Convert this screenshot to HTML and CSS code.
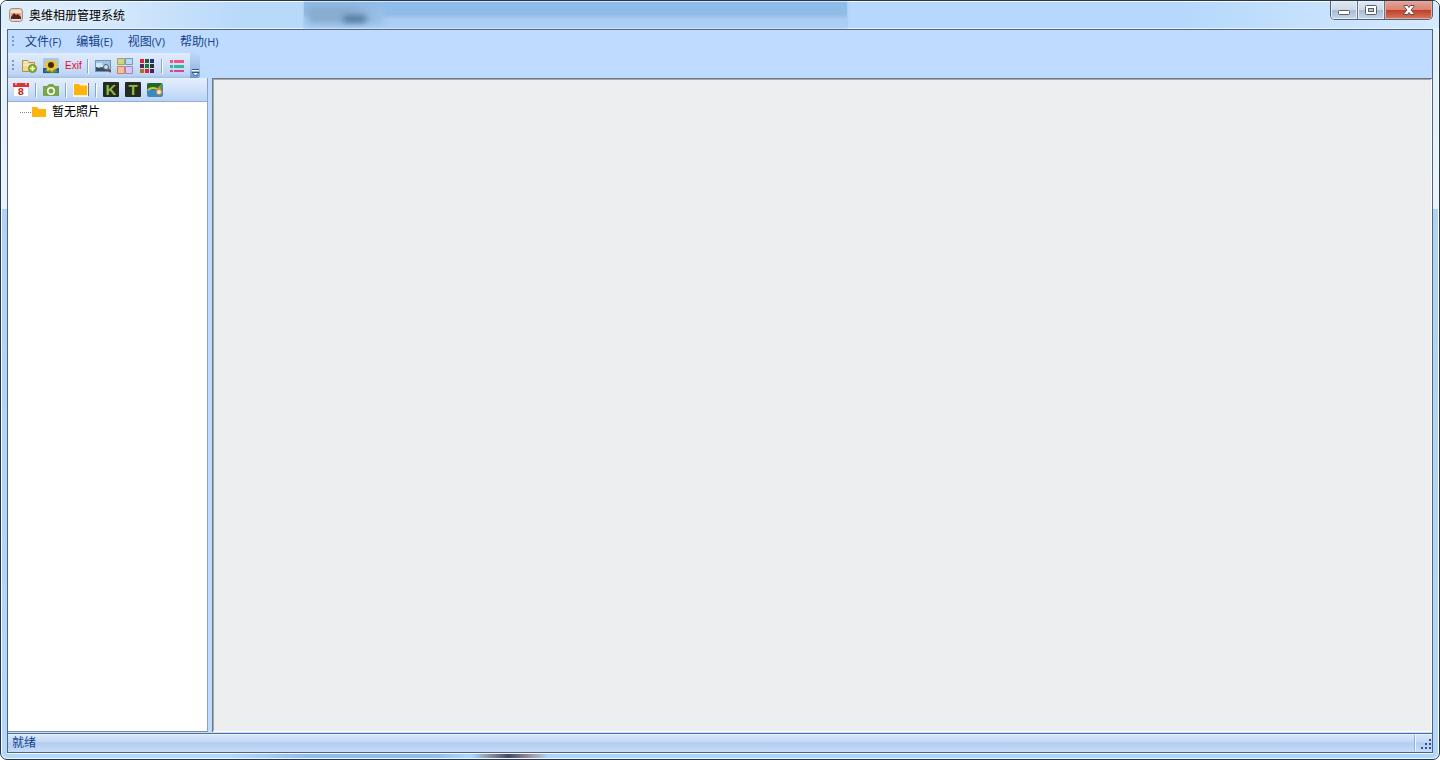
FILE: index.html
```html
<!DOCTYPE html>
<html lang="zh-CN">
<head>
<meta charset="utf-8">
<title>奥维相册管理系统</title>
<link rel="stylesheet" href="styles.css">
</head>
<body>
<div class="window">
  <header class="titlebar">
    <div class="glass" aria-hidden="true"><i class="smudge green"></i><i class="smudge dark"></i></div>
    <svg class="app-icon" viewBox="0 0 14 14"><rect x=".5" y=".5" width="13" height="13" rx="3" fill="#e2cdb9" stroke="#9d8e85"/><rect x="2" y="2" width="10" height="10" rx="1" fill="#f8ddc2"/><path d="M2 5h10v4H2z" fill="#eda578"/><path d="M2 11V9l3-4 2 2 2-1 3 3v2z" fill="#4b2525"/></svg>
    <h1 class="title">奥维相册管理系统</h1>
    <div class="controls">
      <button class="control" aria-label="最小化"><svg viewBox="0 0 14 10"><rect x="1.5" y="5.5" width="11" height="4" rx="1" fill="#fff" stroke="#555d70"/></svg></button>
      <button class="control" aria-label="最大化"><svg viewBox="0 0 14 10"><rect x="1.5" y=".5" width="11" height="9" rx="1" fill="#fff" stroke="#555d70"/><rect x="4.5" y="3.5" width="5" height="3" fill="#b4c5d9" stroke="#555d70"/></svg></button>
      <button class="control close" aria-label="关闭"><svg viewBox="0 0 14 10"><path d="M2 .5h3.500L7 2.500 8.500.5H12v1L9 5l3 3.500v1H8.500L7 7.500l-1.500 2H2v-1L5 5 2 1.500z" fill="#fff" stroke="#5f4850"/></svg></button>
    </div>
  </header>
  <div class="client">
    <nav class="menubar">
      <i class="grip"></i>
      <button class="menu">文件<span class="key">(F)</span></button>
      <button class="menu">编辑<span class="key">(E)</span></button>
      <button class="menu">视图<span class="key">(V)</span></button>
      <button class="menu">帮助<span class="key">(H)</span></button>
    </nav>
    <div class="toolbar-row">
      <div class="toolbar">
        <i class="grip"></i>
        <button class="tool" aria-label="添加相册"><svg viewBox="0 0 16 16"><path d="M1.500 13.500v-11h5l1.500 2h5.500v9z" fill="#eed99b" stroke="#b69145"/><path d="M3 4h4M2 7h11" stroke="#fff5cf"/><circle cx="11.500" cy="10.500" r="4" fill="#8bb42c" stroke="#68902a"/><path d="M11.500 8v5M9 10.500h5" stroke="#f4ffdc" stroke-width="1.500"/></svg></button>
        <button class="tool" aria-label="照片"><svg viewBox="0 0 16 16"><rect width="16" height="16" rx="1" fill="#a7c8e8"/><path d="M0 10h16v5H0z" fill="#235aa0"/><path d="M1 13l5-3 2 3 3-3 4 4-6 1z" fill="#62952b"/><path d="M8 1l1.500 2 2.500-1 .5 2.500L15 6l-2 2 1 3-3 .5L9 14l-2-2-3 1-.500-3L1 8l2-2-1-3 3.500.5z" fill="#f5c321"/><circle cx="8" cy="7" r="3" fill="#43270f"/></svg></button>
        <button class="tool exif">Exif</button>
        <i class="sep"></i>
        <button class="tool" aria-label="图片浏览"><svg viewBox="0 0 16 16"><rect x=".5" y="2.500" width="15" height="11" fill="#9cc2e7" stroke="#7590b0"/><path d="M1 5h6v2h7v2H1z" fill="#d1e7f6"/><path d="M1 13V9l3 1 3-1 3 2 5 2z" fill="#374d62"/><circle cx="11" cy="9" r="2.500" fill="#d0dce7" stroke="#555f70"/><path d="M13 11l3 3" stroke="#605149" stroke-width="2"/></svg></button>
        <button class="tool" aria-label="大图标"><svg viewBox="0 0 16 16"><path d="M.5.5h7v6h-7z" fill="#d3d391" stroke="#a1a951"/><path d="M8.500.5h7v6h-7z" fill="#b9daf3" stroke="#6f9ac6"/><path d="M.5 8.500h7v7h-7z" fill="#f7be9e" stroke="#cc8065"/><path d="M8.500 8.500h7v7h-7z" fill="#ddc7f1" stroke="#9c86bd"/></svg></button>
        <button class="tool" aria-label="小图标"><svg viewBox="0 0 16 16"><path d="M1 1h4v4H1z" fill="#e71e2b"/><path d="M6 1h4v4H6z" fill="#245c24"/><path d="M11 1h4v4h-4z" fill="#262c80"/><path d="M1 6h4v4H1z" fill="#59255e"/><path d="M6 6h4v4H6z" fill="#127e39"/><path d="M11 6h4v4h-4z" fill="#303035"/><path d="M1 11h4v4H1z" fill="#b07024"/><path d="M6 11h4v4H6z" fill="#df2428"/><path d="M11 11h4v4h-4z" fill="#531d66"/></svg></button>
        <i class="sep"></i>
        <button class="tool" aria-label="列表"><svg viewBox="0 0 16 16"><path d="M1 2h3v3H1zM5 2h10v3H5z" fill="#ec5683"/><path d="M1 7h3v3H1zM5 7h10v3H5z" fill="#32b99b"/><path d="M1 12h3v2H1zM5 12h10v2H5z" fill="#d5488f"/></svg></button>
        <button class="overflow" aria-label="更多按钮"><svg viewBox="0 0 9 8"><path d="M1 .5h7" stroke="#31578f"/><path d="M1 1.500h7" stroke="#fff"/><path d="M1 3.500h7L4.500 7z" fill="#fff" stroke="#31578f"/></svg></button>
      </div>
    </div>
    <div class="workspace">
      <aside class="sidebar">
        <div class="side-tools">
          <button class="tool" aria-label="按日期"><svg viewBox="0 0 16 16"><path d="M.5 3v11.500h15V3z" fill="#fff" stroke="#d3d7df"/><path d="M0 1h16v4H0z" fill="#dc3537"/><path d="M2 2h2M12 2h2" stroke="#fff"/><text x="8" y="13" text-anchor="middle" class="date">8</text></svg></button>
          <i class="sep"></i>
          <button class="tool" aria-label="按相机"><svg viewBox="0 0 16 16"><path d="M0 4h4l2-2h4l2 2h4v10H0z" fill="#7ba54b"/><circle cx="8" cy="9" r="4" fill="#fff"/><circle cx="8" cy="9" r="2.500" fill="#7ba54b"/></svg></button>
          <i class="sep"></i>
          <button class="tool" aria-label="按文件夹"><svg viewBox="0 0 16 16"><path d="M0 1h15v14H0z" fill="#fff5df"/><path d="M1 2h5l1.500 1.500H14V13H1z" fill="#ffb30b"/><path d="M15.500 1v13" stroke="#707784"/></svg></button>
          <i class="sep"></i>
          <button class="tool" aria-label="按关键字"><svg viewBox="0 0 16 16"><rect width="16" height="15" rx="1" fill="#252a20"/><text x="8" y="13" text-anchor="middle" class="letter">K</text></svg></button>
          <button class="tool" aria-label="按标题"><svg viewBox="0 0 16 16"><rect width="16" height="15" rx="1" fill="#252a20"/><text x="8" y="13" text-anchor="middle" class="letter">T</text></svg></button>
          <button class="tool" aria-label="按地点"><svg viewBox="0 0 16 16"><rect y="1" width="16" height="14" rx="2" fill="#3c89bd"/><path d="M0 7V3q0-2 2-2h13L9 8z" fill="#28651e"/><path d="M1 8q5-5 14 2" fill="none" stroke="#b5cc59" stroke-width="2"/><path d="M15 1v12L9 8z" fill="#5a9c3b"/><path d="M12 4l3 6a3 3 0 1 1-6 0z" fill="#e98346"/><circle cx="12" cy="10" r="2" fill="#fbe3cd"/></svg></button>
        </div>
        <ul class="tree"><li class="node"><i class="branch"></i><svg class="folder" viewBox="0 0 14 12"><path d="M0 1h5l2 2h7v8H0z" fill="#ffb40d"/></svg><span>暂无照片</span></li></ul>
      </aside>
      <main class="view"></main>
    </div>
    <footer class="status"><span class="status-text">就绪</span><svg class="resize" viewBox="0 0 12 12"><path d="M9 1h2v2H9zM5 5h2v2H5zM9 5h2v2H9zM1 9h2v2H1zM5 9h2v2H5zM9 9h2v2H9z" fill="#36547f"/></svg></footer>
  </div>
  <div class="bottom-glass" aria-hidden="true"><i class="spot"></i></div>
</div>
</body>
</html>
```
FILE: styles.css
```css
* { box-sizing: border-box; }
html { background: #fff; }
body { margin: 0; font: 12px/16px "Open Sans", "Noto Sans CJK SC", sans-serif; color: #15428b; }
button { border: 0; margin: 0; padding: 0; background: none; color: inherit; font: inherit; }
svg { display: block; }
.window {
  position: relative;
  display: flex;
  flex-direction: column;
  height: 100vh;
  overflow: hidden;
  padding: 0 6px;
  border: 1px solid #27374b;
  border-radius: 7px;
  background: linear-gradient(#e0effd 0, #e8f3fd 208px, #afd2f5 208px, #b4d7fa 100%);
  box-shadow: inset 0 0 0 1px #f5fbff;
}
.titlebar {
  position: relative;
  display: flex;
  align-items: center;
  flex: 0 0 28px;
  margin: 0 -6px;
  padding-left: 8px;
  background: linear-gradient(90deg, #dfeefb 0, #d3e8fc 110px, #b9d9fb 240px, #b6d8fc 900px, #b5d8fc 1180px, #d6eafd 100%);
  box-shadow: inset 0 1px #f6fcff, inset 0 -1px #e8f4ff;
  border-radius: 6px 6px 0 0;
}
.glass {
  position: absolute;
  inset: 1px auto 1px 303px;
  width: 543px;
  overflow: hidden;
  background: linear-gradient(#8fbdec 0, #91bae7 12px, #a9cdf3 17px, #acd0f6);
  box-shadow: 0 0 2px #91bcea;
}
.smudge { position: absolute; filter: blur(3px); }
.green { left: 4px; top: 4px; width: 76px; height: 18px; background: linear-gradient(90deg, #87adcf 50%, #9bc2ea); }
.dark { left: 40px; top: 14px; width: 22px; height: 6px; background: #456d94; }
.app-icon { width: 14px; height: 14px; }
.title { margin: 0 auto 0 6px; color: #000; font: 12px/18px "Noto Sans CJK SC", sans-serif; text-shadow: 0 0 6px #fff; }
.controls {
  position: relative;
  display: flex;
  align-self: flex-start;
  height: 19px;
  margin-right: 6px;
  border: 1px solid #4e627c;
  border-top: 0;
  border-radius: 0 0 5px 5px;
  overflow: hidden;
}
.control {
  display: grid;
  place-items: center;
  width: 27px;
  border-right: 1px solid #63758b;
  background: linear-gradient(#e1eaf4 0, #cbd8e7 9px, #a9bbd0 9px, #c5d7e9);
  box-shadow: inset 0 0 0 1px #e6eff8;
}
.control svg { width: 14px; height: 10px; }
.close { width: 47px; border: 0; background: linear-gradient(#e6a497 0, #d78371 9px, #bf3d26 9px, #d87960); box-shadow: inset 0 0 0 1px #e9ab9d; }
.client { display: flex; flex-direction: column; flex: 1; min-height: 0; border: 1px solid #526477; background: #bfdbff; }
.menubar { display: flex; align-items: center; flex: 0 0 23px; gap: 15px; padding-left: 4px; }
.menubar .grip { margin-right: -4px; }
.grip { width: 2px; height: 12px; background: repeating-linear-gradient(#7898c9 0 2px, transparent 2px 4px); }
.menu { display: flex; white-space: nowrap; line-height: 18px; }
.key { font-size: 11px; }
.toolbar-row { display: flex; flex: 0 0 25px; }
.toolbar {
  display: flex;
  align-items: center;
  gap: 6px;
  padding-left: 4px;
  border-radius: 0 3px 3px 0;
  background: linear-gradient(#e1ecfc, #cfe0f7 12px, #bcd4f4 22px, #a5c0e5);
}
.toolbar .grip { margin-right: 1px; }
.tool { display: block; flex: none; width: 16px; height: 16px; }
.tool svg { width: 16px; height: 16px; }
.exif { color: #e50b28; font: 10px/16px "Liberation Sans", sans-serif; white-space: nowrap; }
.sep { flex: none; width: 1px; height: 14px; margin-right: 1px; background: #85a5d2; box-shadow: 1px 1px #fff; }
.overflow {
  align-self: stretch;
  display: flex;
  align-items: flex-end;
  justify-content: center;
  width: 10px;
  margin-left: -1px;
  padding-bottom: 1px;
  border-radius: 0 3px 3px 0;
  background: linear-gradient(#c0d8f6, #9fbee7 60%, #6d95cb);
}
.overflow svg { width: 9px; height: 8px; }
.workspace { display: flex; flex: 1; min-height: 0; gap: 4px; padding-bottom: 1px; }
.sidebar { display: flex; flex-direction: column; flex: 0 0 200px; border-right: 1px solid #8aa2c3; background: #fff; }
.side-tools { display: flex; align-items: center; flex: 0 0 24px; gap: 6px; padding-left: 5px; border-bottom: 1px solid #96add0; background: linear-gradient(#e5effd, #d0e2fa 12px, #b9d3f6); }
.date { fill: #c81f2a; font: bold 9px "DejaVu Sans", sans-serif; }
.letter { fill: #8dbc42; font: bold 15px "Liberation Sans", sans-serif; }
.tree { flex: 1; margin: 0; padding: 1px 0 0 12px; border-bottom: 1px solid #7790b0; list-style: none; color: #000; }
.node { display: flex; align-items: center; height: 18px; }
.branch { width: 11px; border-top: 1px dotted #888; }
.folder { width: 14px; height: 12px; margin: 0 6px 0 1px; }
.view { flex: 1; border: 1px solid #70777e; border-width: 1px 0 0 1px; background: #edeef0; box-shadow: inset -1px -1px #fff, inset 1px 1px #a4a7ab; }
.status {
  display: flex;
  align-items: center;
  justify-content: space-between;
  flex: 0 0 19px;
  padding-left: 4px;
  border-top: 1px solid #52709c;
  background: linear-gradient(#f5faff 0, #d7e6fa 1px, #c2d8f5 8px, #b2cdef 9px, #c7dcfa);
}
.status-text { line-height: 18px; }
.resize { width: 18px; height: 16px; padding: 2px 0 0 5px; border-left: 1px solid #91afd8; box-shadow: inset 1px 0 #eff6ff; }
.bottom-glass { position: relative; flex: 0 0 6px; overflow: hidden; box-shadow: inset 0 1px #edf7ff, inset 0 -1px #edf7ff; background: linear-gradient(90deg, #b4daf9 0 220px, #95bdea 300px 430px, #aed6fb 460px); }
.spot { position: absolute; left: 465px; top: 1px; width: 76px; height: 4px; background: linear-gradient(90deg, transparent, #8a899d 25%, #45496a 48%, #a38c9b 75%, transparent); }
```
